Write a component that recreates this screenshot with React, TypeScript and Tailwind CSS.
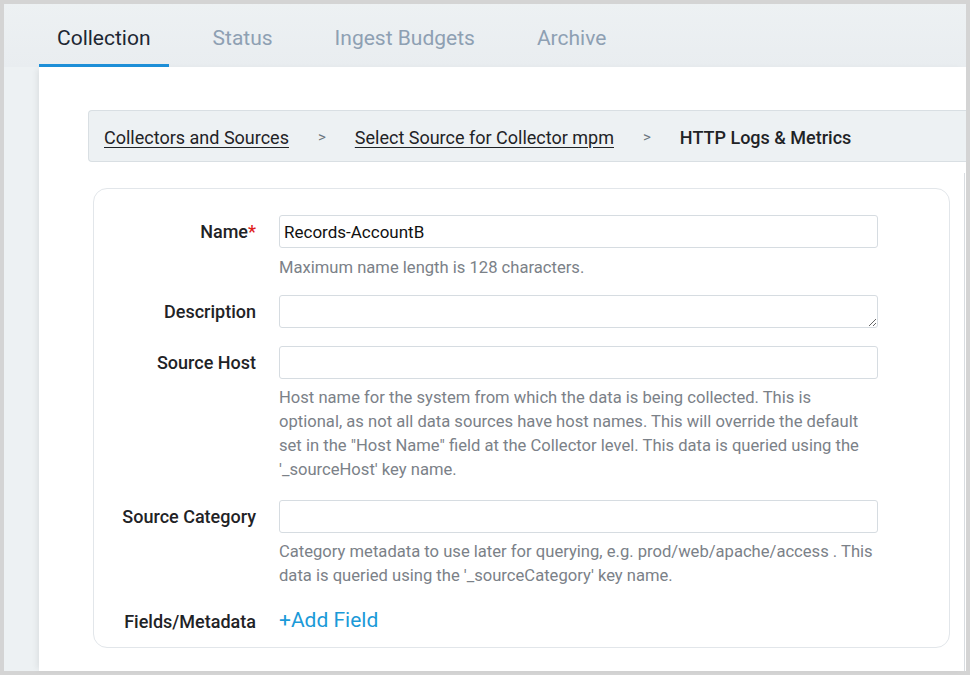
import { ReactNode } from "react"

const tabs = ["Collection", "Status", "Ingest Budgets", "Archive"]

const Field = ({
  label,
  required,
  children,
  className,
}: {
  label: string
  required?: boolean
  children: ReactNode
  className?: string
}) => {
  return (
    <div className={`flex ${className ?? ""}`}>
      <div className="w-[162px] h-[33px] flex items-center justify-end text-[18px] font-medium text-[#1f2326] shrink-0">
        {label}
        {required ? <span className="text-[#e0201b]">*</span> : null}
      </div>
      <div className="ml-[23px] w-[599px]">{children}</div>
    </div>
  )
}

const Help = ({ children, className }: { children: ReactNode; className?: string }) => (
  <p className={`text-[16.6px] leading-[24px] text-[#7b8188] ${className ?? ""}`}>{children}</p>
)

const inputCls =
  "block w-full h-[33px] border border-[#d6dce1] rounded-[3px] px-[4px] text-[17px] text-[#111] outline-none bg-white"

export default function App() {
  return (
    <div
      className="w-[970px] h-[675px] bg-[#d4d4d4] p-[4px] overflow-hidden"
      style={{ fontFamily: "Roboto, 'Noto Sans', sans-serif" }}
    >
      <div className="h-full bg-[#edf1f3] flex flex-col">
        {/* tabs */}
        <div className="h-[63px] flex pl-[35px] gap-[26px] shrink-0 bg-gradient-to-b from-[#edf1f3] to-[#e9edf0]">
          {tabs.map((tab, i) => (
            <div
              key={tab}
              className={
                i === 0
                  ? "h-full flex items-center pt-[9px] px-[18px] border-b-[3px] border-[#1e90d9] text-[21px] text-[#1d2733]"
                  : "h-full flex items-center pt-[9px] px-[18px] border-b-[3px] border-transparent text-[21px] text-[#8ea0b3]"
              }
            >
              {tab}
            </div>
          ))}
        </div>

        {/* white panel */}
        <div className="flex-1 ml-[35px] bg-white shadow-[-4px_0_6px_-2px_rgba(0,0,0,0.07)] flex flex-col">
          <div className="mt-[43px] ml-[49px] h-[52px] bg-[#edf1f3] border border-r-0 border-[#d9dfe3] rounded-l-[4px] flex items-center pl-[15px] pt-[2px] text-[18px]">
            <span className="underline underline-offset-[3px] text-[#1f2326]">Collectors and Sources</span>
            <span className="mx-[29px] text-[15px] text-[#6c7780]">&gt;</span>
            <span className="underline underline-offset-[3px] text-[#1f2326]">Select Source for Collector mpm</span>
            <span className="mx-[29px] text-[15px] text-[#6c7780]">&gt;</span>
            <span className="font-medium text-[#1f2326]">HTTP Logs &amp; Metrics</span>
          </div>

          <div className="flex-1 mt-[11px] mr-[1px] border-r border-[#d9dde1] pl-[54px] pr-[14px] pt-[15px]">
            <div className="h-[460px] border border-[#e2e6ea] rounded-[14px] pt-[26px]">
              <Field label="Name" required>
                <input className={inputCls} defaultValue="Records-AccountB" />
                <Help className="mt-[8px]">Maximum name length is 128 characters.</Help>
              </Field>

              <Field label="Description" className="mt-[15px]">
                <textarea className={`${inputCls} resize-y`} rows={1} />
              </Field>

              <Field label="Source Host" className="mt-[18px]">
                <input className={inputCls} />
                <Help className="mt-[7px] max-w-[590px]">
                  Host name for the system from which the data is being collected. This is optional, as not
                  all data sources have host names. This will override the default set in the "Host Name"
                  field at the Collector level. This data is queried using the '_sourceHost' key name.
                </Help>
              </Field>

              <Field label="Source Category" className="mt-[18px]">
                <input className={inputCls} />
                <Help className="mt-[7px]">
                  Category metadata to use later for querying, e.g. prod/web/apache/access . This data is
                  queried using the '_sourceCategory' key name.
                </Help>
              </Field>

              <div className="flex mt-[19px] items-center h-[28px]">
                <div className="w-[162px] flex justify-end text-[18px] font-medium text-[#1f2326]">
                  Fields/Metadata
                </div>
                <span className="ml-[23px] text-[21px] text-[#1b9ad8] cursor-pointer">+Add Field</span>
              </div>
            </div>
          </div>
        </div>
      </div>
    </div>
  )
}
